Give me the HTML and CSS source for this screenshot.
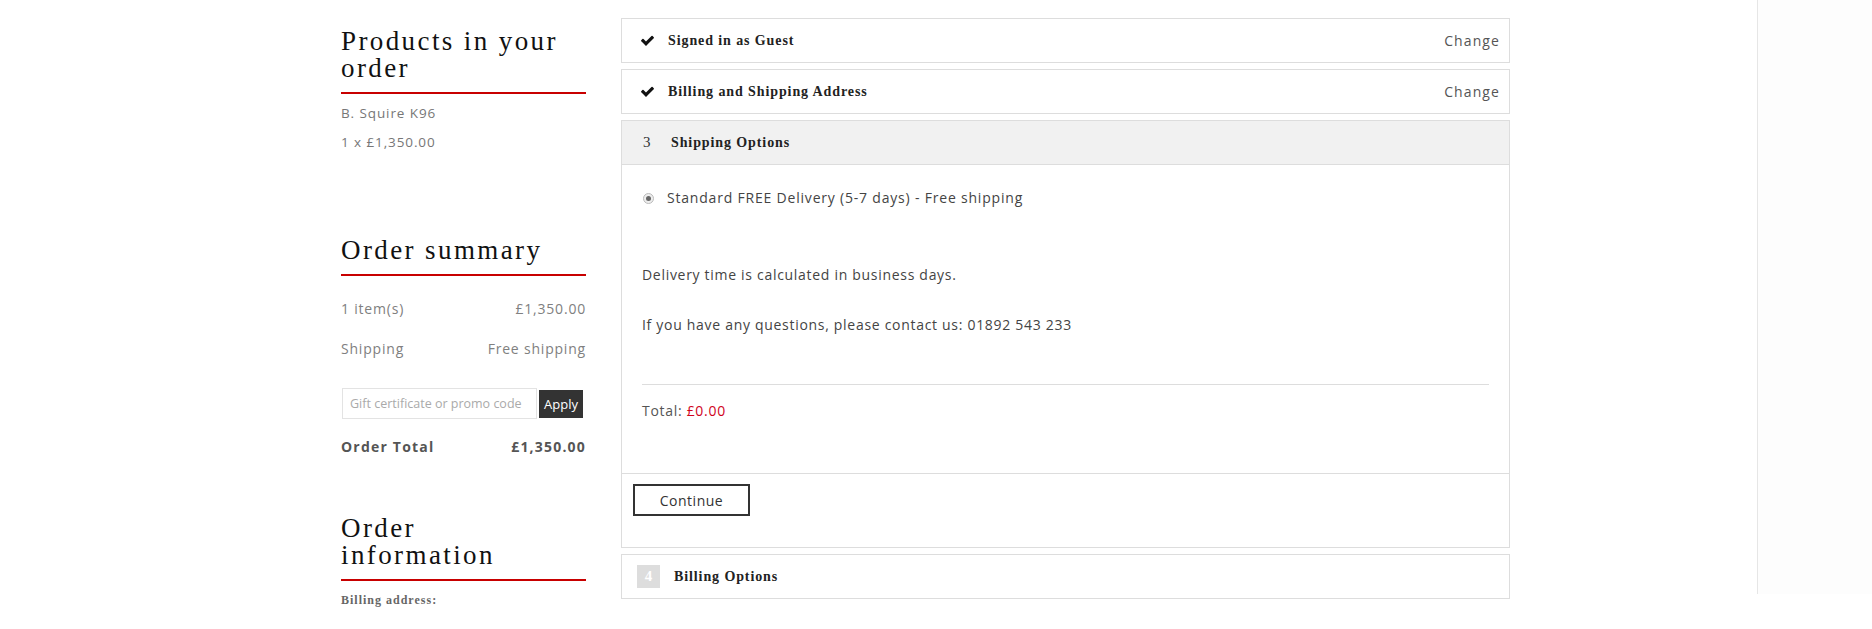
FILE: index.html
```html
<!DOCTYPE html>
<html lang="en">
<head>
    <meta charset="UTF-8">
    <meta name="viewport" content="width=device-width, initial-scale=1.0">
    <title>Checkout</title>
    <link rel="stylesheet" href="styles.css">
</head>
<body>

<div class="page">
    <div class="checkout">

        <!-- Sidebar: cart contents and totals -->
        <aside class="cart-side">
            <h2 class="side-title products-title">Products in your order</h2>
            <div class="product-name">B. Squire K96</div>
            <div class="product-qty">1 x £1,350.00</div>

            <h2 class="side-title summary-title">Order summary</h2>
            <div class="summary-row first-row">
                <span>1 item(s)</span>
                <span>£1,350.00</span>
            </div>
            <div class="summary-row">
                <span>Shipping</span>
                <span>Free shipping</span>
            </div>
            <form class="promo-form" onsubmit="return false;">
                <input type="text" class="promo-input" placeholder="Gift certificate or promo code">
                <button class="promo-btn">Apply</button>
            </form>
            <div class="summary-row total-row">
                <span>Order Total</span>
                <span>£1,350.00</span>
            </div>

            <h2 class="side-title info-title">Order information</h2>
            <div class="info-label">Billing address:</div>
        </aside>

        <!-- Checkout steps -->
        <main class="steps">
            <div class="step done">
                <div class="step-head">
                    <span class="step-icon">
                        <svg width="15" height="13" viewBox="0 0 1792 1536"><path d="M1671 438q0 40-28 68l-724 724-136 136q-28 28-68 28t-68-28l-136-136-362-362q-28-28-28-68t28-68l136-136q28-28 68-28t68 28l294 295 656-657q28-28 68-28t68 28l136 136q28 28 28 68z" fill="#111"/></svg>
                    </span>
                    <span class="step-title">Signed in as Guest</span>
                    <a class="step-change" href="#">Change</a>
                </div>
            </div>

            <div class="step done">
                <div class="step-head">
                    <span class="step-icon">
                        <svg width="15" height="13" viewBox="0 0 1792 1536"><path d="M1671 438q0 40-28 68l-724 724-136 136q-28 28-68 28t-68-28l-136-136-362-362q-28-28-28-68t28-68l136-136q28-28 68-28t68 28l294 295 656-657q28-28 68-28t68 28l136 136q28 28 28 68z" fill="#111"/></svg>
                    </span>
                    <span class="step-title">Billing and Shipping Address</span>
                    <a class="step-change" href="#">Change</a>
                </div>
            </div>

            <div class="step active">
                <div class="step-head">
                    <span class="step-num">3</span>
                    <span class="step-title">Shipping Options</span>
                </div>
                <div class="step-body">
                    <label class="ship-option">
                        <span class="radio"><span class="radio-dot"></span></span>
                        Standard FREE Delivery (5-7 days) - Free shipping
                    </label>
                    <p class="ship-note first-note">Delivery time is calculated in business days.</p>
                    <p class="ship-note">If you have any questions, please contact us: 01892 543 233</p>
                    <div class="ship-total">Total: <span class="price">£0.00</span></div>
                </div>
                <div class="step-actions">
                    <button class="continue-btn">Continue</button>
                </div>
            </div>

            <div class="step">
                <div class="step-head">
                    <span class="step-num boxed">4</span>
                    <span class="step-title">Billing Options</span>
                </div>
            </div>
        </main>
    </div>

    <div class="rail"></div>
</div>

</body>
</html>
```

FILE: styles.css
```css
/* Base page */
body, html {
    margin: 0;
    height: 100%;
    background: #fff;
    font-family: 'Open Sans', 'DejaVu Sans', sans-serif;
    color: #555;
}

.page {
    display: flex;
    height: 100%;
}

.checkout {
    flex: 1;
    display: flex;
    gap: 35px;
    padding: 18px 0 0 341px;
}

/* Thin right-hand rail */
.rail {
    width: 114px;
    height: 594px;
    border-left: 1px solid #e6e6e6;
    background: #fdfdfd;
}

/* Sidebar */
.cart-side {
    width: 245px;
}

.side-title {
    font-family: 'Liberation Serif', serif;
    font-weight: normal;
    font-size: 27px;
    line-height: 27px;
    letter-spacing: 2.4px;
    color: #111;
    margin: 0;
    padding-bottom: 10px;
    border-bottom: 2px solid #c80000;
}

.products-title {
    margin-top: 10px;
}

.product-name, .product-qty {
    font-size: 13.5px;
    line-height: 29px;
    color: #777;
    letter-spacing: 0.9px;
}

.product-name {
    margin-top: 5px;
}

.summary-title {
    margin-top: 80px;
}

.summary-row {
    display: flex;
    justify-content: space-between;
    font-size: 14px;
    line-height: 20px;
    color: #808080;
    letter-spacing: 0.8px;
    margin-top: 20px;
}

.first-row {
    margin-top: 23px;
}

.promo-form {
    display: flex;
    align-items: center;
    margin-top: 29px;
    padding-left: 1px;
}

.promo-input {
    width: 195px;
    height: 31px;
    box-sizing: border-box;
    border: 1px solid #e3e3e3;
    padding: 0 7px;
    font-family: inherit;
    font-size: 12.5px;
    color: #555;
    outline: none;
}

.promo-input::placeholder {
    color: #aaa;
}

.promo-btn {
    margin-left: 2px;
    width: 44px;
    height: 28px;
    border: none;
    background: #333;
    color: #fff;
    font-family: inherit;
    font-size: 13px;
    padding: 0;
    cursor: pointer;
}

.total-row {
    margin-top: 18px;
    font-weight: bold;
    color: #555;
    letter-spacing: 1.2px;
}

.info-title {
    margin-top: 58px;
    padding-right: 20px;
}

.info-label {
    font-family: 'Liberation Serif', serif;
    font-weight: bold;
    font-size: 12px;
    letter-spacing: 1px;
    color: #666;
    margin-top: 12px;
}

/* Checkout steps */
.steps {
    width: 889px;
}

.step {
    border: 1px solid #ddd;
    margin-bottom: 6px;
    background: #fff;
}

.step-head {
    display: flex;
    align-items: center;
    height: 43px;
    padding: 0 9px 0 18px;
}

.active .step-head {
    background: #f1f1f1;
    border-bottom: 1px solid #ddd;
}

.step-icon {
    width: 28px;
    display: flex;
}

.step-num {
    width: 28px;
    padding-left: 3px;
    font-family: 'Liberation Serif', serif;
    font-size: 15px;
    color: #333;
}

.step-num.boxed {
    width: 23px;
    height: 23px;
    padding: 0;
    margin: 0 14px 0 -3px;
    background: #ddd;
    color: #fff;
    font-weight: bold;
    text-align: center;
    line-height: 23px;
}

.step-title {
    flex: 1;
    font-family: 'Liberation Serif', serif;
    font-weight: bold;
    font-size: 14px;
    letter-spacing: 0.9px;
    color: #222;
}

.step-change {
    font-size: 14px;
    color: #555;
    text-decoration: none;
    letter-spacing: 1.1px;
}

.step-body {
    padding: 23px 20px 0 20px;
}

.ship-option {
    display: flex;
    align-items: center;
    font-size: 14px;
    letter-spacing: 0.8px;
    color: #444;
    line-height: 20px;
}

.radio {
    width: 9px;
    height: 9px;
    border: 1px solid #bbb;
    border-radius: 50%;
    background: #eee;
    margin: 0 13px 0 1px;
    display: flex;
    align-items: center;
    justify-content: center;
}

.radio-dot {
    width: 5px;
    height: 5px;
    border-radius: 50%;
    background: #666;
}

.ship-note {
    margin: 0 0 30px;
    font-size: 14px;
    line-height: 20px;
    letter-spacing: 0.7px;
    color: #444;
}

.first-note {
    margin-top: 57px;
}

.ship-total {
    border-top: 1px solid #ddd;
    padding-top: 16px;
    margin-top: 49px;
    height: 72px;
    font-size: 14px;
    letter-spacing: 0.7px;
    color: #555;
}

.price {
    color: #d0021b;
}

.step-actions {
    border-top: 1px solid #ddd;
    padding: 10px 11px 31px;
}

.continue-btn {
    width: 117px;
    height: 32px;
    border: 2px solid #333;
    background: #fff;
    font-family: inherit;
    font-size: 14px;
    letter-spacing: 0.5px;
    color: #333;
    cursor: pointer;
}
```
